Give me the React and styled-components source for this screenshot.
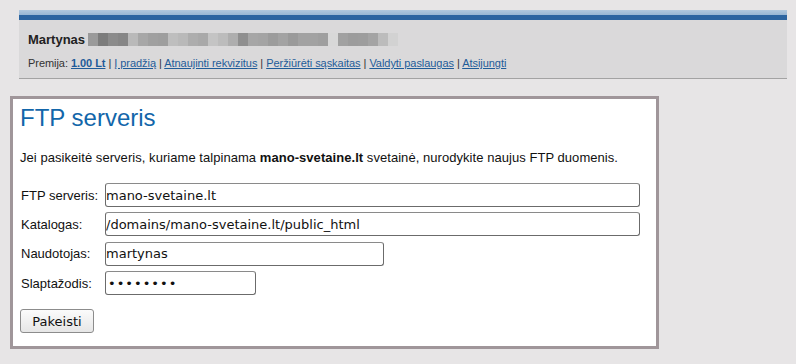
import React from 'react';
import styled, { createGlobalStyle } from 'styled-components';

const GlobalStyle = createGlobalStyle`
  html, body {
    margin: 0;
    padding: 0;
    background: #e7e5e6;
    font-family: "Liberation Sans", Arial, sans-serif;
    color: #111;
  }
`;

const Page = styled.div`
  padding-top: 10px;
  padding-bottom: 16px;
`;

const Header = styled.header`
  margin-left: 19px;
  width: 768px;
  background: #dad9da;
  border-bottom: 1px solid #a3a3a3;
`;

const TopBar = styled.div`
  height: 5px;
  background: linear-gradient(#b1c8de, #98b6d3);
  border-bottom: 5px solid #2c64a0;
`;

const HeaderBody = styled.div`
  padding: 11px 9px 9px;
`;

const NameRow = styled.div`
  display: flex;
  align-items: center;
  height: 17px;
  font-size: 13px;
  font-weight: bold;
  color: #222;
`;

const Mosaic = styled.div`
  display: flex;
  margin-left: 3px;
  height: 13px;
`;

const Cell = styled.span`
  width: 10px;
  height: 13px;
  background: ${p => p.$c};
`;

const Links = styled.div`
  margin-top: 9px;
  font-size: 11px;
  letter-spacing: -0.05px;
  color: #333;
`;

const Link = styled.a`
  color: #1f5c99;
  text-decoration: underline;
  font-weight: ${p => (p.$bold ? 'bold' : 'normal')};
  cursor: pointer;
`;

const Panel = styled.section`
  margin: 17px 0 0 10px;
  width: 636px;
  background: #fff;
  border: 3px solid #a0969a;
  padding: 5px 0 13px 7px;
`;

const Title = styled.h1`
  margin: 0;
  font-size: 24px;
  font-weight: normal;
  line-height: 28px;
  color: #1266aa;
`;

const Intro = styled.p`
  margin: 18px 0 17px;
  font-size: 13px;
  line-height: 16px;
  letter-spacing: 0.05px;
`;

const Form = styled.form`
  display: grid;
  grid-template-columns: 85px auto;
  row-gap: 5.4px;
  align-items: center;
  justify-items: start;
`;

const Label = styled.label`
  font-size: 13px;
  padding-left: 1px;
`;

const Input = styled.input`
  box-sizing: border-box;
  width: ${p => p.$w}px;
  height: 24px;
  margin: 0;
  padding: 1px 1px 1px 0;
  border: 1px solid #6b6b6b;
  border-top-color: #8a8a8a;
  border-radius: 3px;
  background: #fff;
  font-family: "DejaVu Sans", sans-serif;
  font-size: 13px;
  color: #111;
  outline: none;
  ${p => p.type === 'password' && 'letter-spacing: 1px; padding-left: 2px;'}
`;

const Button = styled.button`
  margin-top: 14px;
  width: 74px;
  height: 24px;
  padding: 0;
  border: 1px solid #8c8c8c;
  border-radius: 3px;
  background: linear-gradient(#fbfbfb, #e6e6e6);
  font-family: "DejaVu Sans", sans-serif;
  font-size: 13px;
  color: #111;
`;

const mosaic = [
  '#9a9a9a', '#7c7c7c', '#8b8b8b', '#868686', '#b9b9b9', '#a7a7a7', '#a0a0a0', '#9e9e9e',
  '#bebebe', '#b9b9b9', '#adadad', '#a9a9a9', '#c4c4c4', '#bcbcbc', '#aeaeae', '#8f8f8f',
  '#a6a6a6', '#a4a4a4', '#9c9c9c', '#a3a3a3', '#9a9a9a', '#a2a2a2', '#a2a2a2', '#9f9f9f',
  '#d8d8d8', '#a1a1a1', '#9c9c9c', '#9d9d9d', '#a4a4a4', '#bcbcbc', '#d2d2d2',
];

export default function App() {
  return (
    <Page>
      <GlobalStyle />
      <Header>
        <TopBar />
        <HeaderBody>
          <NameRow>
            Martynas
            <Mosaic>
              {mosaic.map((c, i) => <Cell key={i} $c={c} />)}
            </Mosaic>
          </NameRow>
          <Links>
            Premija: <Link $bold>1.00 Lt</Link> | <Link>Į pradžią</Link> | <Link>Atnaujinti rekvizitus</Link> | <Link>Peržiūrėti sąskaitas</Link> | <Link>Valdyti paslaugas</Link> | <Link>Atsijungti</Link>
          </Links>
        </HeaderBody>
      </Header>
      <Panel>
        <Title>FTP serveris</Title>
        <Intro>
          Jei pasikeitė serveris, kuriame talpinama <b>mano-svetaine.lt</b> svetainė, nurodykite naujus FTP duomenis.
        </Intro>
        <Form onSubmit={e => e.preventDefault()}>
          <Label>FTP serveris:</Label>
          <Input $w={535} defaultValue="mano-svetaine.lt" />
          <Label>Katalogas:</Label>
          <Input $w={535} defaultValue="/domains/mano-svetaine.lt/public_html" />
          <Label>Naudotojas:</Label>
          <Input $w={279} defaultValue="martynas" />
          <Label>Slaptažodis:</Label>
          <Input $w={151} type="password" defaultValue="martynas" />
        </Form>
        <Button type="button">Pakeisti</Button>
      </Panel>
    </Page>
  );
}
